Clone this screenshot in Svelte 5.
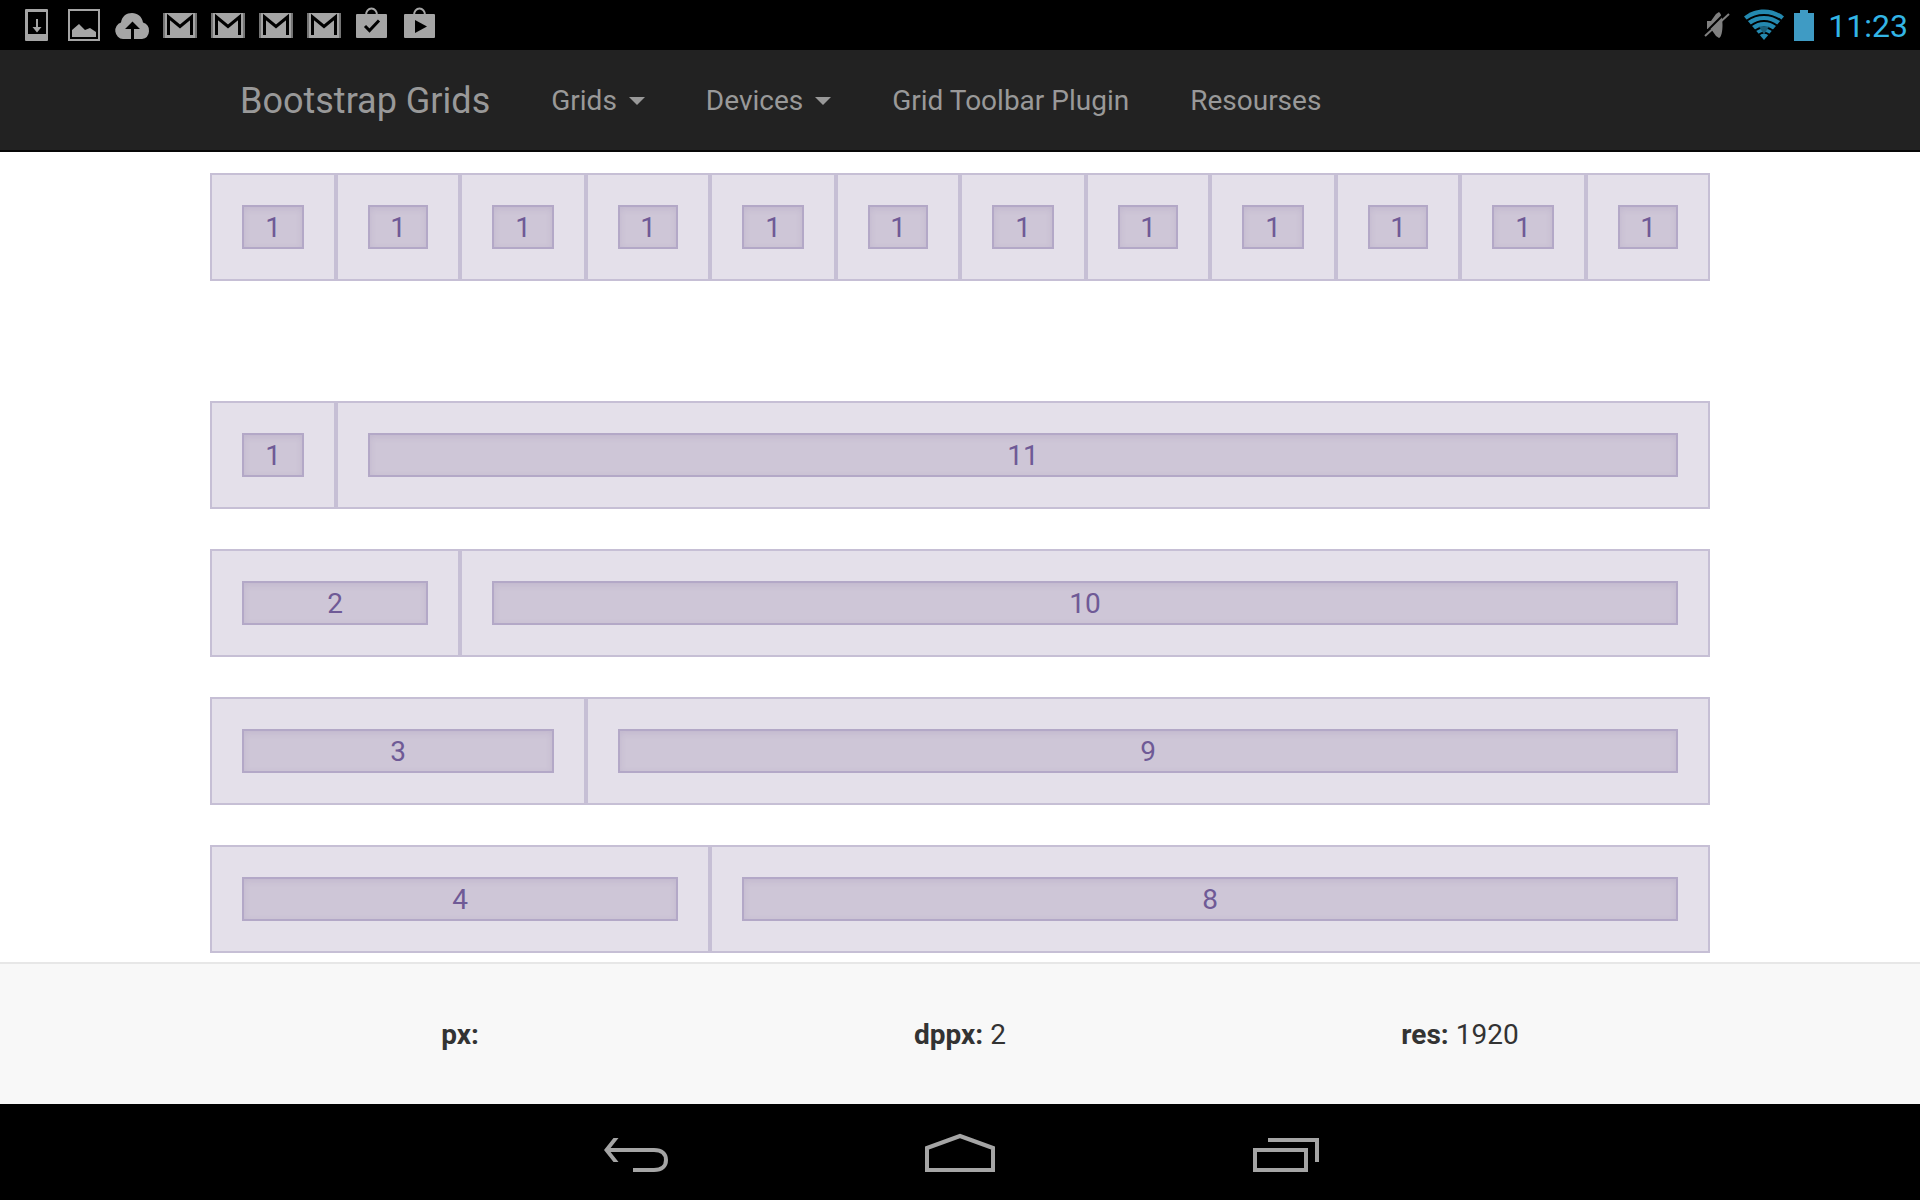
<script>
  const notifications = ['download', 'image', 'cloud', 'mail', 'mail', 'mail', 'mail', 'bagCheck', 'bagPlay'];
  const first = Array(12).fill(1);
  const pairs = [[1, 11], [2, 10], [3, 9], [4, 8]];
  const stats = [
    { label: 'px:', value: '' },
    { label: 'dppx:', value: '2' },
    { label: 'res:', value: '1920' }
  ];
</script>

{#snippet row(cells)}
  <div class="row">
    {#each cells as n}
      <div class="cell" style:grid-column="span {n}"><div class="inner">{n}</div></div>
    {/each}
  </div>
{/snippet}

<div class="screen">
  <div class="status">
    <div class="notes">
      {#each notifications as kind}
        <svg class="note" viewBox="0 0 48 50" aria-hidden="true">
          {#if kind === 'download'}
            <path fill-rule="evenodd" d="M14 9h21a1 1 0 0 1 1 1v30a1 1 0 0 1-1 1H14a1 1 0 0 1-1-1V10a1 1 0 0 1 1-1zM16 12v22h18V12z" />
            <path d="M24 19h2v8h3.500l-4.500 5.500-4.500-5.500H24z" />
          {:else if kind === 'image'}
            <path fill-rule="evenodd" d="M8 9h32v32H8zM10 11v28h28V11z" />
            <path d="M12 37v-7l7-6 6 6 5-2 6 4v5z" />
          {:else if kind === 'cloud'}
            <path d="M15 39a8.500 8.500 0 0 1-2-16.500C14 16 18.500 13 24 13s10 3.500 11 9.500A8.500 8.500 0 0 1 34 39z" />
            <path class="hole" d="M23 39V29h-6l7.500-7.500L32 29h-6v10z" />
          {:else if kind === 'mail'}
            <rect x="7" y="13" width="34" height="25" opacity=".7" />
            <rect x="9" y="13" width="30" height="25" />
            <path class="cut" d="M12.500 35V17L24 26.500 35.500 17v18" />
          {:else}
            <path class="handle" d="M18 15a5.500 6.500 0 0 1 11 0" />
            <path d="M9 14h29a1 1 0 0 1 1 1v22a1 1 0 0 1-1 1H9a1 1 0 0 1-1-1V15a1 1 0 0 1 1-1z" />
            {#if kind === 'bagCheck'}
              <path class="cut" d="M17 26l4.500 4.500L31 20.500" />
            {:else}
              <path class="hole" d="M19 20l12 6.500L19 33z" />
            {/if}
          {/if}
        </svg>
      {/each}
    </div>
    <div class="system">
      <svg class="mute" viewBox="0 0 26 28" aria-hidden="true">
        <path d="M3 10h4l5-7 3-2c2.500 2 3.500 7 3.500 13s-1 12-3.500 13l-3-2-5-7H3z" />
        <path class="slash-gap" d="M0 23L22 1" />
        <path class="slash" d="M1 25L25 3" />
      </svg>
      <svg class="wifi" viewBox="0 0 40 32" aria-hidden="true">
        <path d="M20 31L0 7.500C11-2 29-2 40 7.500z" />
        <path class="gap" d="M3 11.500c10-7.500 24-7.500 34 0M7 16.500c8-6 18-6 26 0M11 21.500c5.500-4 12.500-4 18 0M15 25.500c3-2 7-2 10 0" />
        <path class="core" d="M15 17.500h10l-5 8z" />
      </svg>
      <svg class="battery" viewBox="0 0 20 32" aria-hidden="true">
        <path d="M0 4h6V1h8v3h6v28H0z" />
      </svg>
      <time>11:23</time>
    </div>
  </div>

  <header>
    <nav class="container">
      <a class="brand" href="#top">Bootstrap Grids</a>
      <button type="button">Grids<span class="caret"></span></button>
      <button type="button">Devices<span class="caret"></span></button>
      <a href="#toolbar">Grid Toolbar Plugin</a>
      <a href="#resources">Resourses</a>
    </nav>
  </header>

  <main>
    <div class="container">
      <section>{@render row(first)}</section>
      <section class="pairs">
        {#each pairs as p}{@render row(p)}{/each}
      </section>
    </div>
  </main>

  <footer>
    <div class="container stats">
      {#each stats as s}
        <div><strong>{s.label}</strong> {s.value}</div>
      {/each}
    </div>
  </footer>

  <div class="softkeys">
    <button type="button" aria-label="Back">
      <svg viewBox="0 0 80 48" aria-hidden="true">
        <path class="head" d="M8 18l9.500-12h5L13 18l9.500 12h-5z" />
        <path d="M11 18H58C66 18 70 22 70 28S66 38 58 38H37" />
      </svg>
    </button>
    <button type="button" aria-label="Home">
      <svg viewBox="0 0 80 48" aria-hidden="true">
        <path d="M7 38V16L40 4l33 12v22z" />
      </svg>
    </button>
    <button type="button" aria-label="Recent apps">
      <svg viewBox="0 0 80 48" aria-hidden="true">
        <path d="M11 18h51v20H11z" />
        <path d="M24 8h49v22" />
      </svg>
    </button>
  </div>
</div>

<style>
  :global(body) {
    background: #fff;
    color: #333;
    font: 28px/40px Roboto, sans-serif;
  }
  .screen {
    display: flex;
    flex-direction: column;
    min-height: 100vh;
  }
  .container {
    box-sizing: border-box;
    width: 100%;
    max-width: 1500px;
    margin: 0 auto;
  }
  .status {
    display: flex;
    justify-content: space-between;
    align-items: center;
    height: 50px;
    padding: 0 12px;
    background: #000;
  }
  .notes, .system {
    display: flex;
    align-items: center;
  }
  .note {
    width: 48px;
    height: 50px;
    fill: #a5a5a5;
  }
  .note .hole { fill: #000; }
  .note .cut {
    fill: none;
    stroke: #000;
    stroke-width: 3;
  }
  .note .handle {
    fill: none;
    stroke: #a5a5a5;
    stroke-width: 2;
  }
  .mute {
    width: 26px;
    height: 28px;
    margin-right: 14px;
    fill: #808080;
  }
  .slash { stroke: #808080; stroke-width: 2; }
  .slash-gap { stroke: #000; stroke-width: 2; }
  .wifi {
    width: 40px;
    height: 32px;
    margin-right: 10px;
    fill: #2489b0;
  }
  .wifi .gap { fill: none; stroke: #000; stroke-width: 2; }
  .wifi .core { fill: #1a5f7a; }
  .battery {
    width: 20px;
    height: 32px;
    margin-right: 14px;
    fill: #3f9bc4;
  }
  time {
    padding-top: 2px;
    color: #33b5e5;
    font-size: 32px;
  }
  header {
    background: #222;
    border-bottom: 2px solid #080808;
  }
  nav {
    display: flex;
    gap: 1px;
  }
  nav a, nav button {
    display: flex;
    align-items: center;
    padding: 31px 30px 29px;
    border: 0;
    background: none;
    color: #999;
    font: inherit;
    text-decoration: none;
    cursor: pointer;
  }
  nav .brand { font-size: 36px; }
  .caret {
    margin-left: 12px;
    border: 8px solid transparent;
    border-top-color: #999;
    border-bottom: 0;
  }
  main {
    flex: 1;
    padding: 21px 0 9px;
  }
  .pairs {
    display: grid;
    gap: 40px;
    margin-top: 120px;
  }
  .row {
    display: grid;
    grid-template-columns: repeat(6, 126fr 124fr);
  }
  .cell {
    min-width: 0;
    padding: 30px;
    background: #e4e0ea;
    border: 2px solid #c6bfd5;
  }
  .inner {
    padding-top: 2px;
    background: #cec6d7;
    border: 2px solid #b3a8c7;
    box-shadow: inset 0 2px 6px rgba(86, 61, 124, .1);
    color: #6f5a96;
    line-height: 38px;
    text-align: center;
  }
  footer {
    padding: 51px 0 49px;
    background: #f8f8f8;
    border-top: 2px solid #e7e7e7;
  }
  .stats {
    display: grid;
    grid-template-columns: repeat(3, 1fr);
    text-align: center;
  }
  .softkeys {
    display: flex;
    justify-content: center;
    height: 96px;
    background: #000;
  }
  .softkeys button {
    display: flex;
    justify-content: center;
    align-items: center;
    width: 324px;
    padding: 8px 0 0;
    border: 0;
    background: none;
    cursor: pointer;
  }
  .softkeys svg {
    width: 80px;
    height: 48px;
    fill: none;
    stroke: #a5a5a5;
    stroke-width: 4;
  }
  .softkeys .head {
    fill: #a5a5a5;
    stroke: none;
  }
</style>
